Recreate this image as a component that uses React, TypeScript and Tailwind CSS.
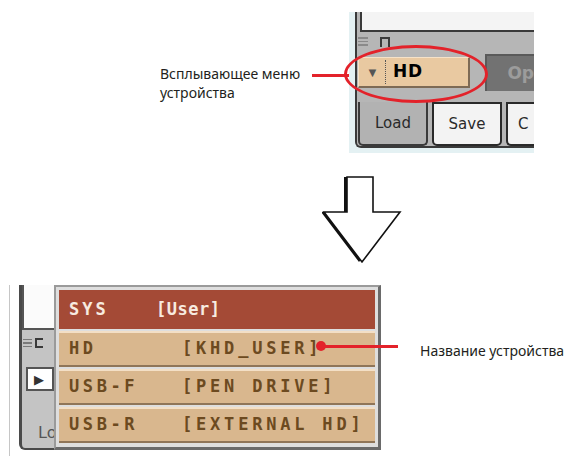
const mono = "font-['DejaVu_Sans_Mono',monospace] font-bold"

const rows = [
  { name: 'HD', label: '[KHD_USER]' },
  { name: 'USB-F', label: '[PEN DRIVE]' },
  { name: 'USB-R', label: '[EXTERNAL HD]' },
]

const DownArrow = () => (
  <svg width="80" height="90" viewBox="0 0 80 90" className="ml-[322px] mt-[22px]">
    <polygon points="22,2 48,2 48,37 75,37 37,87 -1,37 22,37" fill="#111" />
    <polygon points="25,2 51,2 51,37 78,37 40,87 2,37 25,37" fill="#fff" stroke="#111" strokeWidth="1.6" strokeLinejoin="miter" />
  </svg>
)

const TopShot = () => (
  <div className="relative flex h-[141px] w-[185px] flex-col bg-[#e4f1f3] pb-[5px] pl-[6px]">
    <div className="flex flex-1 flex-col rounded-bl-[6px] border-b-2 border-l-2 border-[#3a3a3a] bg-[#b6b6b6]">
      <div className="ml-[3px] h-[20px] border-b-2 border-l-2 border-[#3a3a3a] bg-[#f4f4f4]" />
      <div className="flex h-[16px] items-center gap-[12px] pl-[1px] pt-[3px]">
        <div className="flex w-[10px] flex-col gap-[2px]">
          <div className="h-[1.5px] bg-[#8a8a8a]" />
          <div className="h-[1.5px] bg-[#8a8a8a]" />
          <div className="h-[1.5px] bg-[#8a8a8a]" />
        </div>
        <div className="h-[10px] w-[10px] border-2 border-b-0 border-[#3a3a3a]" />
      </div>
      <div className="mt-[6px] flex items-center">
        <div className="ml-[1px] flex h-[31px] w-[119px] items-center border-b-2 border-r-2 border-[#7d6a55] border-l border-t border-l-[#f6e2c8] border-t-[#f6e2c8] bg-[#e9c9a1]">
          <span className="ml-[7px] text-[13px] leading-none text-[#555]">▼</span>
          <div className="ml-[6px] h-[24px] border-l border-dotted border-[#555]" />
          <span className="ml-[7px] font-['DejaVu_Sans',sans-serif] text-[17px] font-bold tracking-[1px] text-black">HD</span>
        </div>
        <div className="ml-[15px] flex h-[37px] flex-1 items-center border-l-2 border-t-2 border-[#5a5a5a] bg-[#727272] pl-[20px]">
          <span className="font-['DejaVu_Sans',sans-serif] text-[17px] font-bold text-[#9c9c9c]">Op</span>
        </div>
      </div>
      <div className="mt-[11px] flex flex-1 items-stretch font-['DejaVu_Sans',sans-serif] text-[15px] text-[#2a2a2a]">
        <div className="ml-[1px] flex w-[70px] items-center justify-center rounded-b-[5px] border-x-2 border-b-2 border-[#3a3a3a] bg-[#b2b2b2]">Load</div>
        <div className="ml-[4px] flex w-[70px] items-center justify-center rounded-b-[5px] border-2 border-[#2a2a2a] bg-[#f3f3f3]">Save</div>
        <div className="ml-[4px] flex flex-1 items-center rounded-bl-[5px] border-y-2 border-l-2 border-[#2a2a2a] bg-[#f3f3f3] pl-[10px]">C</div>
      </div>
    </div>
    <div className="absolute left-[-5px] top-[33px] h-[58px] w-[144px] rounded-[50%] border-[3.5px] border-[#e3222a]" />
  </div>
)

const BottomShot = () => (
  <div className="relative flex h-[171px] w-[390px]">
    <div className="w-[10px] border-r border-[#c6c6c6]" />
    <div className="ml-[9px] mb-[6px] flex w-[36px] flex-col rounded-bl-[6px] border-b-2 border-l-[3px] border-[#4a4a4a] bg-[#c4c4c4]">
      <div className="h-[45px] border-b-2 border-l-2 border-[#555] bg-[#fbfbfb]" />
      <div className="mt-[8px] flex items-center gap-[3px] pl-[1px]">
        <div className="flex w-[9px] flex-col gap-[2px]">
          <div className="h-[1.5px] bg-[#7a7a7a]" />
          <div className="h-[1.5px] bg-[#7a7a7a]" />
          <div className="h-[1.5px] bg-[#7a7a7a]" />
        </div>
        <div className="h-[10px] w-[8px] border-2 border-r-0 border-[#3a3a3a]" />
      </div>
      <div className="ml-[4px] mt-[19px] flex h-[24px] w-[28px] items-center border-2 border-[#555] bg-white pl-[6px] text-[13px] leading-none text-[#333]">▶</div>
      <div className="ml-[16px] mt-[30px] font-['DejaVu_Sans',sans-serif] text-[16px] text-[#555]">Lo</div>
    </div>
    <div className="-ml-[1px] flex h-[165px] w-[327px] flex-col border-2 border-b-[3px] border-r-[3px] border-[#9a9a9a] border-b-[#6a6a6a] border-r-[#6a6a6a] bg-[#dedede] p-[3px]">
      <div className={`flex h-[39px] items-center bg-[#a44a36] pl-[10px] text-[17px] text-[#f7ebe0] ${mono}`}>
        <span className="w-[87px] tracking-[3px]">SYS</span>
        <span className="tracking-[0.5px]">[User]</span>
      </div>
      {rows.map((r) => (
        <div key={r.name} className={`mt-[2px] flex h-[36px] items-center border-b-2 border-t-2 border-b-[#8f7558] border-t-[#f3dfc6] bg-[#d9b78e] pl-[10px] text-[17px] text-[#6c4a20] ${mono}`}>
          <span className="w-[113px] tracking-[3.6px]">{r.name}</span>
          <span className="tracking-[3.8px]">{r.label}</span>
        </div>
      ))}
    </div>
    <div className="absolute left-[316px] top-[56px] h-[10px] w-[10px] rounded-full bg-[#e3222a]" />
    <div className="absolute left-[321px] top-[60px] h-[3px] w-[77px] bg-[#e3222a]" />
  </div>
)

export default function App() {
  return (
    <div className="flex h-[456px] w-[568px] flex-col overflow-hidden bg-white font-['Noto_Sans',sans-serif] text-[14px] text-[#231f20]">
      <div className="flex items-start pt-[12px]">
        <div className="ml-[160px] mt-[52px] w-[152px] leading-[19px]">
          Всплывающее меню
          <br />
          устройства
        </div>
        <div className="mt-[62px] h-[3px] w-[37px] bg-[#e3222a]" />
        <TopShot />
      </div>
      <DownArrow />
      <div className="mt-[20px] flex items-start">
        <BottomShot />
        <div className="ml-[30px] mt-[55px] whitespace-nowrap">Название устройства</div>
      </div>
    </div>
  )
}
